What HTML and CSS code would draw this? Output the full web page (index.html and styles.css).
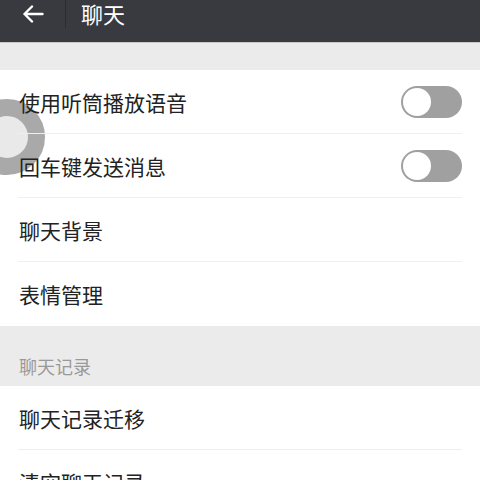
FILE: index.html
```html
<!DOCTYPE html>
<html lang="zh-CN">
<head>
<meta charset="utf-8">
<link rel="stylesheet" href="styles.css">
</head>
<body>
<div class="topbar">
  <div class="back">
    <svg width="22" height="18" viewBox="0 0 22 18"><path d="M20.5 9H2.5M10 1.5L2.5 9L10 16.5" fill="none" stroke="#fff" stroke-width="2.4" stroke-linecap="round" stroke-linejoin="round"/></svg>
  </div>
  <div class="sep"></div>
  <div class="title">聊天</div>
</div>
<div class="gap"></div>
<div class="list">
  <div class="touch"></div>
  <div class="row"><span class="label">使用听筒播放语音</span><span class="switch"><span class="knob"></span></span></div>
  <div class="row"><span class="label">回车键发送消息</span><span class="switch"><span class="knob"></span></span></div>
  <div class="row"><span class="label">聊天背景</span></div>
  <div class="row last"><span class="label">表情管理</span></div>
</div>
<div class="section">聊天记录</div>
<div class="list">
  <div class="row"><span class="label">聊天记录迁移</span></div>
  <div class="row last"><span class="label">清空聊天记录</span></div>
</div>
</body>
</html>
```
FILE: styles.css
```css
html, body {
  margin: 0;
  padding: 0;
  background: #ebebeb;
  font-family: "Noto Sans CJK SC", "Noto Sans", sans-serif;
  overflow: hidden;
  height: 480px;
}
.topbar {
  height: 42px;
  background: #393a3f;
  border-bottom: 1px solid #c9c9c9;
  display: flex;
  align-items: flex-start;
}
.back {
  width: 65px;
  height: 28px;
  display: flex;
  align-items: center;
  padding-left: 22px;
  box-sizing: border-box;
}
.sep {
  width: 1px;
  height: 28px;
  background: #2c2d31;
}
.title {
  color: #fff;
  font-size: 22px;
  line-height: 26px;
  padding-left: 15px;
}
.gap {
  height: 27px;
}
.list {
  background: #fff;
  position: relative;
  overflow: visible;
}
.touch {
  position: absolute;
  left: -31px;
  top: 29px;
  width: 42px;
  height: 42px;
  border-radius: 50%;
  border: 17px solid #a9a9a9;
  background: #e9e9e9;
}
.row {
  position: relative;
  height: 64px;
  margin-left: 18px;
  margin-right: 18px;
  border-bottom: 1px solid #efefef;
  box-sizing: border-box;
  display: flex;
  align-items: center;
  justify-content: space-between;
}
.row.last {
  border-bottom: none;
}
.label {
  font-size: 21px;
  color: #222;
  padding-left: 1px;
  line-height: 28px;
}
.switch {
  width: 61px;
  height: 32px;
  border-radius: 16px;
  background: #a0a0a0;
  display: flex;
  align-items: center;
  padding-left: 2px;
  box-sizing: border-box;
}
.knob {
  width: 28px;
  height: 28px;
  border-radius: 50%;
  background: #fff;
}
.section {
  height: 60px;
  box-sizing: border-box;
  padding: 28px 0 0 19px;
  font-size: 18px;
  line-height: 24px;
  color: #999;
}
```
